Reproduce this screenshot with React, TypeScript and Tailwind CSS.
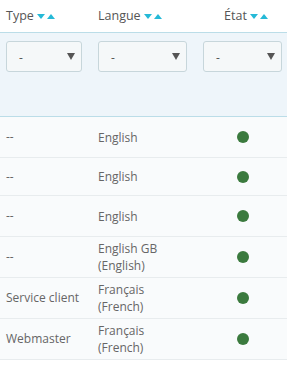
import React from 'react';

const rows = [
  { type: '--', lang: ['English'], h: 'h-[41px]' },
  { type: '--', lang: ['English'], h: 'h-[38px]' },
  { type: '--', lang: ['English'], h: 'h-[41px]' },
  { type: '--', lang: ['English GB', '(English)'], h: 'h-[41px]' },
  { type: 'Service client', lang: ['Français', '(French)'], h: 'h-[41px]' },
  { type: 'Webmaster', lang: ['Français', '(French)'], h: 'h-[41px]' },
];

function SortArrows() {
  return (
    <span className="ml-[3px] inline-flex items-center gap-[2px]">
      <svg width="8" height="5" viewBox="0 0 8 5">
        <path d="M0 0 L8 0 L4 5 Z" fill="#25b9d7" />
      </svg>
      <svg width="8" height="5" viewBox="0 0 8 5">
        <path d="M0 5 L8 5 L4 0 Z" fill="#25b9d7" />
      </svg>
    </span>
  );
}

function Select({ w }: { w: string }) {
  return (
    <div className={`${w} h-[31px] rounded-[3px] border border-[#c7d6db] bg-[#f5f8f9] flex items-center justify-between pl-[12px] pr-[6px]`}>
      <span className="text-[12px] text-[#555] mt-[2px]">-</span>
      <svg width="8" height="7" viewBox="0 0 8 7">
        <path d="M0 0 L8 0 L4 7 Z" fill="#555" />
      </svg>
    </div>
  );
}

export default function App() {
  return (
    <div className="w-[287px] h-[369px] bg-white overflow-hidden text-[12px]" style={{ fontFamily: '"Open Sans", sans-serif' }}>
      <div className="flex h-[33px] items-center border-b border-[#bbdde8] text-[#555] text-[12.5px]">
        <div className="w-[92px] pl-[6px] flex items-center">Type<SortArrows /></div>
        <div className="w-[105px] pl-[6px] flex items-center">Langue<SortArrows /></div>
        <div className="flex-1 flex items-center justify-center pl-[8px]">État<SortArrows /></div>
      </div>
      <div className="flex h-[84px] items-start bg-[#eef5fa] border-b border-[#bbdde8] pt-[8px]">
        <div className="w-[92px] pl-[6px]"><Select w="w-[76px]" /></div>
        <div className="w-[105px] pl-[6px]"><Select w="w-[89px]" /></div>
        <div className="pl-[6px]"><Select w="w-[79px]" /></div>
      </div>
      {rows.map((r, i) => (
        <div key={i} className={`flex ${r.h} items-center border-b border-[#e8ecee] bg-[#f9fbfc] text-[#666] text-[12px]`}>
          <div className="w-[92px] pl-[6px]">{r.type}</div>
          <div className="w-[105px] pl-[6px] leading-[17px]">
            {r.lang.map((l) => (
              <div key={l}>{l}</div>
            ))}
          </div>
          <div className="flex-1 flex justify-center pl-[1px]">
            <span className="w-[12px] h-[12px] rounded-full bg-[#3b7a3e]" />
          </div>
        </div>
      ))}
    </div>
  );
}
